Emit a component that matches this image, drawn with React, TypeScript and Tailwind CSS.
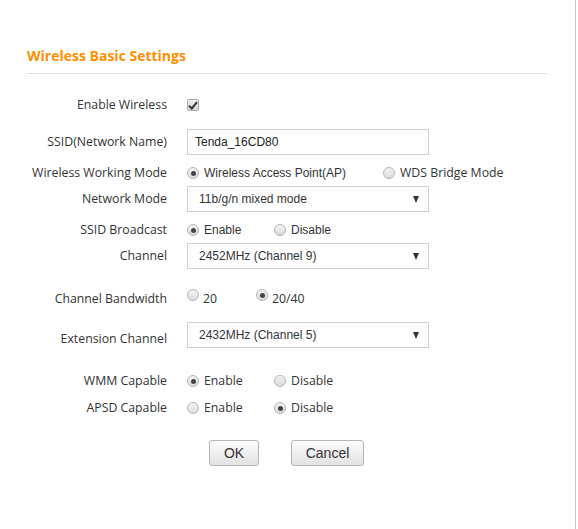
import React from 'react';

const labelFont = { fontFamily: '"Open Sans", "Liberation Sans", sans-serif' };

const Radio: React.FC<{ checked?: boolean; className?: string }> = ({ checked, className = '' }) => (
  <span
    className={`inline-flex h-[12px] w-[12px] shrink-0 items-center justify-center rounded-full border border-[#b4b4b4] bg-gradient-to-b from-[#f4f4f4] to-[#dcdcdc] ${className}`}
  >
    {checked ? <span className="h-[5px] w-[5px] rounded-full bg-[#444]" /> : null}
  </span>
);

const Option: React.FC<{ checked?: boolean; label: string; width?: string; arial?: boolean }> = ({ checked, label, width = '', arial }) => (
  <span className={`flex items-center gap-[5px] ${width}`}>
    <Radio checked={checked} />
    <span
      className={`${arial ? 'text-[12px]' : 'text-[12.3px]'} text-[#333]`}
      style={arial ? { fontFamily: '"Liberation Sans", Arial, sans-serif' } : labelFont}
    >
      {label}
    </span>
  </span>
);

const Select: React.FC<{ value: string }> = ({ value }) => (
  <div className="flex h-[26px] w-[242px] items-center justify-between border border-[#cfcfcf] bg-white pl-[11px] pr-[9px]">
    <span className="text-[12px] text-[#333]" style={{ fontFamily: '"Liberation Sans", Arial, sans-serif' }}>
      {value}
    </span>
    <svg width="6" height="7" viewBox="0 0 6 7">
      <polygon points="0,0 6,0 3,7" fill="#333" />
    </svg>
  </div>
);

const Row: React.FC<{ label: string; className: string; labelClass?: string; children: React.ReactNode }> = ({ label, className, labelClass = '', children }) => (
  <div className={`flex items-center ${className}`}>
    <div className={`w-[167px] shrink-0 whitespace-nowrap text-right text-[12.3px] text-[#333] ${labelClass}`} style={labelFont}>
      {label}
    </div>
    <div className="ml-[20px] flex items-center">{children}</div>
  </div>
);

export default function App() {
  return (
    <div className="h-[529px] w-[576px] border-r border-[#c8c8c8] bg-white">
      <div className="pl-[27px] pt-[46px]">
        <h1 className="text-[14px] font-bold leading-[20px] text-[#ff8f00]" style={labelFont}>
          Wireless Basic Settings
        </h1>
        <div className="mt-[7px] h-px w-[520px] bg-[#e4e4e4]" />
      </div>

      <div className="mt-[19px]">
        <Row label="Enable Wireless" className="h-[24px]">
          <span className="flex h-[12px] w-[12px] items-center justify-center rounded-[2px] border border-[#aaa] bg-gradient-to-b from-[#eee] to-[#d6d6d6]">
            <svg width="10" height="9" viewBox="0 0 10 9">
              <path d="M1 4.8 L3.8 7.5 L9 1.2" stroke="#333" strokeWidth="2" fill="none" />
            </svg>
          </span>
        </Row>

        <Row label="SSID(Network Name)" className="mt-[12px] h-[26px]">
          <div className="flex h-[26px] w-[242px] items-center border border-[#cfcfcf] pl-[7px]">
            <span className="text-[12px] text-[#222]" style={{ fontFamily: '"Liberation Sans", Arial, sans-serif' }}>
              Tenda_16CD80
            </span>
          </div>
        </Row>

        <Row label="Wireless Working Mode" className="mt-[8px] h-[20px]">
          <Option checked label="Wireless Access Point(AP)" width="w-[196px]" arial />
          <Option label="WDS Bridge Mode" />
        </Row>

        <Row label="Network Mode" className="mt-[3px] h-[26px]">
          <Select value="11b/g/n mixed mode" />
        </Row>

        <Row label="SSID Broadcast" className="mt-[8px] h-[20px]">
          <Option checked label="Enable" width="w-[87px]" arial />
          <Option label="Disable" arial />
        </Row>

        <Row label="Channel" className="mt-[3px] h-[26px]">
          <Select value="2452MHz (Channel 9)" />
        </Row>

        <Row label="Channel Bandwidth" className="mt-[20px] h-[20px]">
          <span className="flex w-[69px] items-center gap-[4px]">
            <Radio className="-translate-y-[4px]" />
            <span className="text-[12.3px] text-[#333]" style={labelFont}>20</span>
          </span>
          <span className="flex items-center gap-[4px]">
            <Radio checked className="-translate-y-[4px]" />
            <span className="text-[12.3px] text-[#333]" style={labelFont}>20/40</span>
          </span>
        </Row>

        <Row label="Extension Channel" className="mt-[13px] h-[26px]" labelClass="translate-y-[4px]">
          <Select value="2432MHz (Channel 5)" />
        </Row>

        <Row label="WMM Capable" className="mt-[23px] h-[20px]">
          <Option checked label="Enable" width="w-[87px]" />
          <Option label="Disable" />
        </Row>

        <Row label="APSD Capable" className="mt-[7px] h-[20px]">
          <Option label="Enable" width="w-[87px]" />
          <Option checked label="Disable" />
        </Row>

        <div className="mt-[22px] flex pl-[209px]" style={{ fontFamily: '"Liberation Sans", Arial, sans-serif' }}>
          <button className="h-[26px] w-[50px] rounded-[3px] border border-[#b5b5b5] bg-gradient-to-b from-[#fbfbfb] to-[#e2e2e2] text-[14px] text-[#333]">
            OK
          </button>
          <button className="ml-[32px] h-[26px] w-[73px] rounded-[3px] border border-[#b5b5b5] bg-gradient-to-b from-[#fbfbfb] to-[#e2e2e2] text-[14px] text-[#333]">
            Cancel
          </button>
        </div>
      </div>
    </div>
  );
}
